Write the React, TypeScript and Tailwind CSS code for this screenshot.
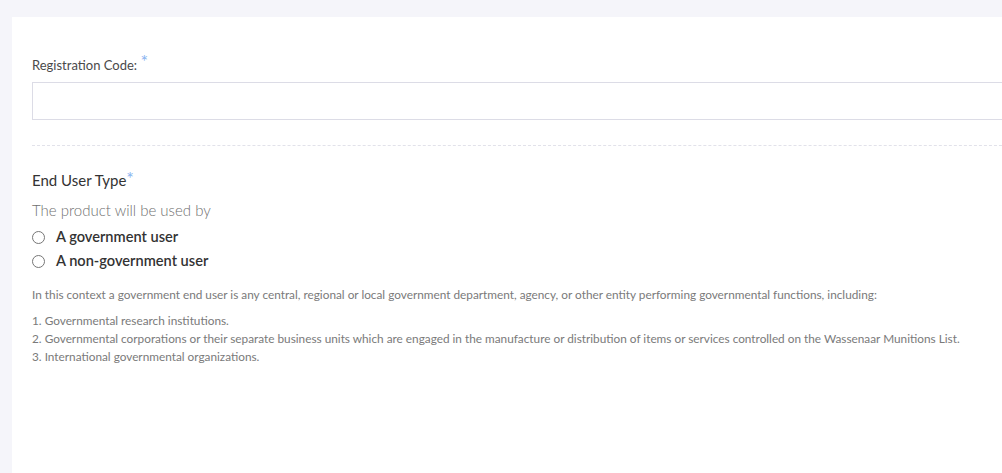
import React from 'react';

const listItems = [
  '1. Governmental research institutions.',
  '2. Governmental corporations or their separate business units which are engaged in the manufacture or distribution of items or services controlled on the Wassenaar Munitions List.',
  '3. International governmental organizations.',
];

export default function App() {
  return (
    <div
      className="h-[473px] w-[1002px] overflow-hidden bg-[#f5f5fa] pt-[17px] pl-[12px]"
      style={{ fontFamily: 'Lato, "Open Sans", sans-serif' }}
    >
      <div className="w-[1010px] h-[500px] bg-white pl-5 pt-[37px]">
        {/* Registration code */}
        <div className="h-5 text-[13px] leading-5 text-[#4a4a4a]">
          Registration Code:{' '}
          <span className="relative -top-[2px] text-[18px] leading-none text-[#8ab4f0]">*</span>
        </div>
        <input
          type="text"
          className="mt-2 block h-[38px] w-full border border-[#dcdce6] bg-white outline-none"
        />

        <div className="mt-[25px] border-t border-dashed border-[#e2e2ea]" />

        {/* End user type */}
        <div className="mt-[23px] h-[22px] text-[15px] leading-[22px] text-[#333]">
          End User Type
          <span className="relative -top-[1px] text-[18px] leading-none text-[#8ab4f0]">*</span>
        </div>
        <div className="mt-2 text-[15px] leading-[22px] text-[#6f6f6f] font-light">
          The product will be used by
        </div>
        <div className="mt-1 flex flex-col">
          {['A government user', 'A non-government user'].map((label) => (
            <label key={label} className="flex h-6 items-center">
              <span className="h-[13px] w-[13px] rounded-full border border-[#767676] bg-white" />
              <span className="ml-[11px] text-[14.6px] leading-6 font-semibold text-[#333]">{label}</span>
            </label>
          ))}
        </div>

        <p className="mt-[13px] text-[11.8px] leading-[18px] text-[#7a7a7a]">
          In this context a government end user is any central, regional or local government department, agency, or other entity performing governmental functions, including:
        </p>
        <div className="mt-2 text-[11.8px] leading-[18px] text-[#7a7a7a]">
          {listItems.map((item) => (
            <div key={item}>{item}</div>
          ))}
        </div>
      </div>
    </div>
  );
}
